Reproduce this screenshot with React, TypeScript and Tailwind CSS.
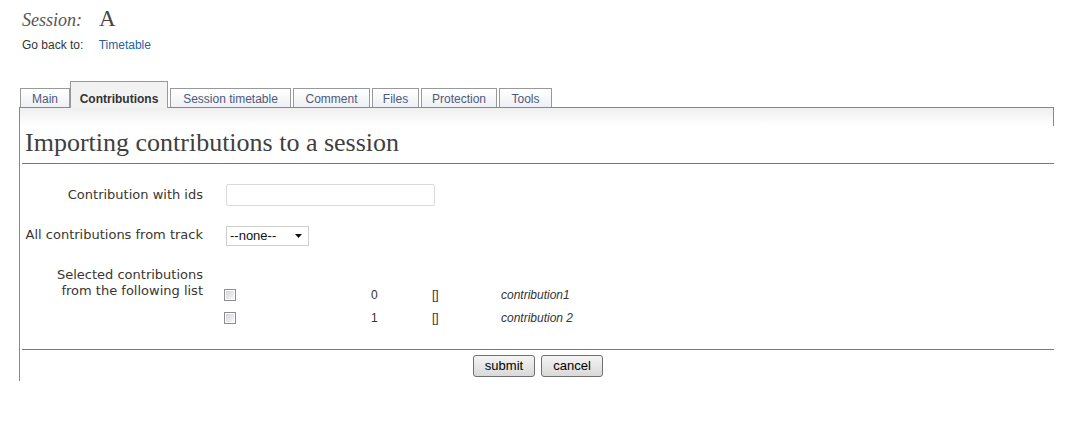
import React from "react";

const TABS = [
  { name: "Main", w: "w-[50px]" },
  { name: "Contributions", w: "w-[98px]" },
  { name: "Session timetable", w: "w-[121px]" },
  { name: "Comment", w: "w-[77px]" },
  { name: "Files", w: "w-[47px]" },
  { name: "Protection", w: "w-[76px]" },
  { name: "Tools", w: "w-[53px]" },
];
const ACTIVE = "Contributions";

const CONTRIBS = [
  { id: 0, title: "contribution1" },
  { id: 1, title: "contribution 2" },
];

const sans = "font-['Liberation_Sans',Arial,sans-serif]";
const serif = "font-['Liberation_Serif','Times_New_Roman',serif]";
const label = "font-['DejaVu_Sans',Verdana,sans-serif] text-[13px] text-[#3b3530] text-right whitespace-nowrap";

function Tab({ name, w }: { name: string; w: string }) {
  if (name === ACTIVE) {
    return (
      <div className={`relative -mb-px -ml-[2px] mr-[2px] h-[27px] border border-b-0 border-[#999] bg-[#f2f2f2] pt-[8px] text-center text-[12px] font-bold text-[#333] ${w}`}>
        {name}
      </div>
    );
  }
  return (
    <div className={`mr-[2px] h-[19px] border border-b-0 border-[#999] bg-gradient-to-b from-white to-[#eef0f4] pt-[1px] text-center text-[12px] text-[#4d5a7c] ${w}`}>
      {name}
    </div>
  );
}

function Checkbox() {
  return (
    <span className="inline-flex h-[12px] w-[12px] border border-[#8d8d8d] bg-white p-px">
      <span className="h-full w-full bg-gradient-to-br from-[#d4d5da] to-[#f8f8fa]" />
    </span>
  );
}

export default function App() {
  return (
    <div className={`min-h-[425px] bg-white pl-[19px] pr-[13px] ${sans}`}>
      {/* session header */}
      <div className="flex items-baseline pl-[3px] pt-[2px]">
        <span className={`${serif} text-[18px] italic text-[#555]`}>Session:</span>
        <span className={`${serif} ml-[17px] text-[23px] text-[#444]`}>A</span>
      </div>
      <div className="-mt-px pl-[3px] text-[12px] text-[#333]">
        Go back to: <a className="ml-[12px] text-[#1f62a8]">Timetable</a>
      </div>

      {/* tabs */}
      <div className="mt-[27px] flex items-end pl-px">
        {TABS.map((t) => (
          <Tab key={t.name} name={t.name} w={t.w} />
        ))}
      </div>

      {/* panel */}
      <div className="border-l border-t border-[#888] pb-[4px]">
        <div className="h-[18px] border-r border-[#888] bg-gradient-to-b from-[#efefef] to-white" />
        <h1 className={`${serif} ml-[2px] border-b border-[#777] pb-[3px] pl-[3px] text-[26px] leading-[34px] text-[#3f3f3f]`}>
          Importing contributions to a session
        </h1>

        <div className="grid grid-cols-[183px_1fr] gap-x-[23px] pt-[20px]">
          <div className={`${label} flex justify-end pt-px`}>Contribution with ids</div>
          <div>
            <div className="h-[22px] w-[209px] rounded-[2px] border border-[#dadada] bg-white" />
          </div>

          <div className={`${label} flex justify-end pt-[19px]`}>All contributions from track</div>
          <div className="pt-[20px]">
            <div className="flex h-[20px] w-[83px] items-center justify-between border border-[#cfcfcf] bg-white pl-[3px] pr-[6px] text-[13px] text-[#111]">
              <span>--none--</span>
              <svg width="7" height="4" viewBox="0 0 7 4">
                <path d="M0 0h7L3.5 4z" fill="#111" />
              </svg>
            </div>
          </div>

          <div className={`${label} mt-[21px] leading-[16px]`}>
            Selected contributions
            <br />
            from the following list
          </div>
          <div className="pt-[38px]">
            {CONTRIBS.map((c) => (
              <div key={c.id} className="grid h-[23px] grid-cols-[145px_61px_69px_1fr] items-center text-[12px] text-[#333]">
                <div className="-ml-[2px]">
                  <Checkbox />
                </div>
                <div>{c.id}</div>
                <div>[]</div>
                <div className="italic">{c.title}</div>
              </div>
            ))}
          </div>
        </div>

        <div className="ml-[2px] mt-[19px] border-t border-[#777] pt-[5px]">
          <div className="flex justify-center gap-[6px]">
            <button className="h-[22px] w-[62px] rounded-[3px] border border-[#707070] bg-gradient-to-b from-[#f4f4f4] to-[#d9d9d9] text-[13px] text-black">
              submit
            </button>
            <button className="h-[22px] w-[62px] rounded-[3px] border border-[#707070] bg-gradient-to-b from-[#f4f4f4] to-[#d9d9d9] text-[13px] text-black">
              cancel
            </button>
          </div>
        </div>
      </div>
    </div>
  );
}
